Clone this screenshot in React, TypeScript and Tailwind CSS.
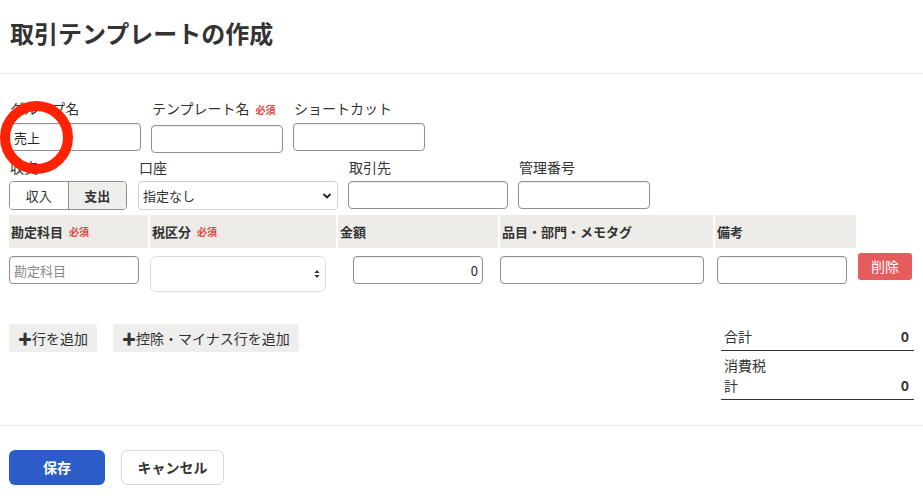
import React from "react";

const font = { fontFamily: '"Noto Sans CJK JP", "Noto Sans", sans-serif' };

const Required: React.FC = () => (
    <span className="ml-[6px] text-[10px] font-bold text-[#e04848]">必須</span>
);

const TextInput: React.FC<{ w: string; value?: string; placeholder?: string; right?: boolean }> = ({
    w,
    value,
    placeholder,
    right,
}) => (
    <input
        readOnly
        value={value ?? ""}
        placeholder={placeholder}
        className={`${w} block h-[28px] rounded-[4px] border border-[#8f8f8f] bg-white px-[4px] text-[13px] text-[#222] shadow-[inset_0_1px_1px_rgba(0,0,0,0.08)] outline-none placeholder:text-[#8a8a8a] ${
            right ? "text-right" : ""
        }`}
        style={font}
    />
);

const cols = ["w-[139px]", "w-[186px]", "w-[160px]", "w-[213px]", "w-[141px]"];

const App: React.FC = () => {
    return (
        <div className="relative min-h-[499px] bg-white text-[#333]" style={font}>
            <div className="h-[74px] border-b border-[#e6e6e6] px-[10px] pt-[16px]">
                <h1 className="text-[24px] font-bold leading-[34px] text-[#333]">
                    取引テンプレートの作成
                </h1>
            </div>

            <div className="border-b border-[#e6e6e6] px-[9px] pt-[24px] pb-[25px]">
                {/* row 1 */}
                <div className="flex gap-[10px]">
                    <div className="w-[132px]">
                        <div className="mb-[5px] pl-[1px] text-[14px] leading-[20px]">グループ名</div>
                        <TextInput w="w-[132px]" value="売上" />
                    </div>
                    <div className="w-[132px]">
                        <div className="mb-[5px] pl-[1px] text-[14px] leading-[20px]">
                            テンプレート名
                            <Required />
                        </div>
                        <TextInput w="w-[132px]" />
                    </div>
                    <div className="w-[132px]">
                        <div className="mb-[5px] pl-[1px] text-[14px] leading-[20px]">ショートカット</div>
                        <TextInput w="w-[132px]" />
                    </div>
                </div>

                {/* row 2 */}
                <div className="mt-[4px] flex">
                    <div className="w-[118px]">
                        <div className="mb-[4px] pl-[1px] text-[14px] leading-[20px]">収支</div>
                        <div className="flex h-[29px] overflow-hidden rounded-[4px] border border-[#8f8f8f] text-[13px]">
                            <div className="flex flex-1 items-center justify-center bg-white">収入</div>
                            <div className="flex flex-1 items-center justify-center border-l border-[#8f8f8f] bg-[#eeeeec] font-bold">
                                支出
                            </div>
                        </div>
                    </div>
                    <div className="ml-[11px] w-[200px]">
                        <div className="mb-[4px] pl-[1px] text-[14px] leading-[20px]">口座</div>
                        <div className="flex h-[29px] items-center justify-between rounded-[4px] border border-[#d0d0d0] bg-white px-[4px] text-[13px]">
                            <span>指定なし</span>
                            <svg width="10" height="8" viewBox="0 0 10 8" className="mr-[1px]">
                                <path d="M1.5 2 L5 5.5 L8.5 2" fill="none" stroke="#222" strokeWidth="1.8" />
                            </svg>
                        </div>
                    </div>
                    <div className="ml-[10px] w-[160px]">
                        <div className="mb-[4px] pl-[1px] text-[14px] leading-[20px]">取引先</div>
                        <TextInput w="w-[160px]" />
                    </div>
                    <div className="ml-[10px] w-[132px]">
                        <div className="mb-[4px] pl-[1px] text-[14px] leading-[20px]">管理番号</div>
                        <TextInput w="w-[132px]" />
                    </div>
                </div>

                {/* table header */}
                <div className="mt-[5px] flex gap-[2px]">
                    {["勘定科目", "税区分", "金額", "品目・部門・メモタグ", "備考"].map((h, i) => (
                        <div
                            key={h}
                            className={`${cols[i]} flex h-[33px] items-center bg-[#edece8] pl-[2px] text-[13px] font-bold`}
                        >
                            {h}
                            {i < 2 && <Required />}
                        </div>
                    ))}
                </div>

                {/* table row */}
                <div className="mt-[5px] flex items-start gap-[2px]">
                    <div className={`${cols[0]} pt-[3px]`}>
                        <TextInput w="w-[130px]" placeholder="勘定科目" />
                    </div>
                    <div className={`${cols[1]} pt-[3px]`}>
                        <div className="flex h-[36px] w-[176px] items-center justify-end rounded-[6px] border border-[#dcdcdc] bg-white pr-[5px]">
                            <svg width="6" height="10" viewBox="0 0 6 10">
                                <path d="M3 1 L5.5 4 H0.5 Z" fill="#333" />
                                <path d="M3 9 L5.5 6 H0.5 Z" fill="#333" />
                            </svg>
                        </div>
                    </div>
                    <div className={`${cols[2]} flex justify-center pt-[3px]`}>
                        <TextInput w="w-[130px]" value="0" right />
                    </div>
                    <div className={`${cols[3]} pt-[3px]`}>
                        <TextInput w="w-[204px]" />
                    </div>
                    <div className={`${cols[4]} pt-[3px] pl-[2px]`}>
                        <TextInput w="w-[130px]" />
                    </div>
                    <button className="h-[27px] w-[54px] rounded-[3px] bg-[#e65c5c] text-[14px] text-white">
                        削除
                    </button>
                </div>

                {/* add buttons + totals */}
                <div className="mt-[32px] flex items-start justify-between">
                    <div className="flex gap-[16px]">
                        <button className="h-[28px] rounded-[3px] bg-[#eeeeec] px-[9px] text-[14px] text-[#333]">
                            <span className="font-bold">✚</span>行を追加
                        </button>
                        <button className="h-[28px] rounded-[3px] bg-[#eeeeec] px-[9px] text-[14px] text-[#333]">
                            <span className="font-bold">✚</span>控除・マイナス行を追加
                        </button>
                    </div>
                    <div className="-mt-[2px] w-[193px] text-[14px]">
                        <div className="flex justify-between border-b border-[#333] py-[4px] pl-[3px] pr-[5px] leading-[20px]">
                            <span>合計</span>
                            <span className="font-bold">0</span>
                        </div>
                        <div className="flex items-end justify-between border-b border-[#333] py-[4px] pl-[3px] pr-[5px] leading-[20px]">
                            <span className="w-[48px]">消費税計</span>
                            <span className="font-bold">0</span>
                        </div>
                    </div>
                </div>
            </div>

            {/* footer */}
            <div className="flex gap-[16px] px-[9px] pt-[24px]">
                <button className="h-[35px] w-[96px] rounded-[6px] bg-[#2b5cc8] text-[14px] font-bold text-white">
                    保存
                </button>
                <button className="h-[35px] w-[103px] rounded-[6px] border border-[#d8d8d8] bg-white text-[14px] font-bold text-[#333]">
                    キャンセル
                </button>
            </div>

            {/* annotation circle */}
            <div className="pointer-events-none absolute left-[0px] top-[101px] h-[73px] w-[73px] rounded-full border-[10px] border-[#ff2200]" />
        </div>
    );
};

export default App;
